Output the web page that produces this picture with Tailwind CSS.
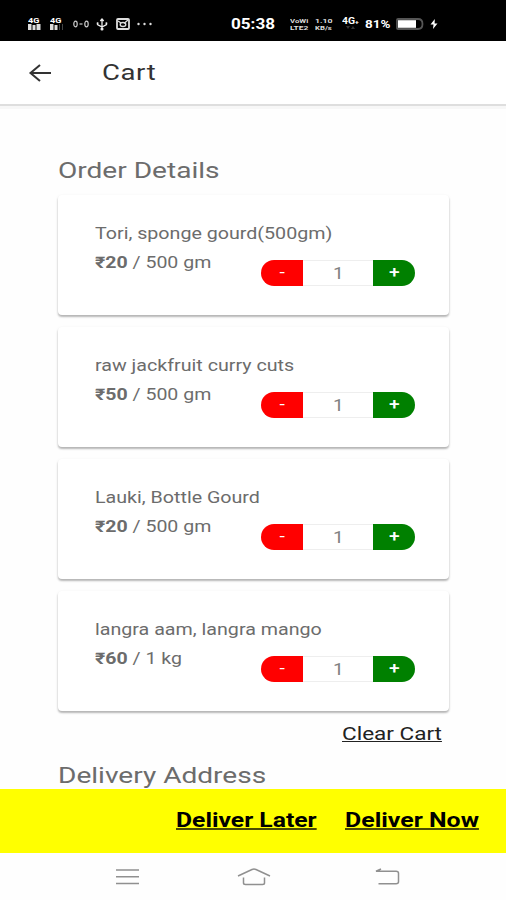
<!DOCTYPE html>
<html lang="en">
<head>
    <meta charset="UTF-8">
    <meta name="viewport" content="width=device-width, initial-scale=1.0">
    <title>Cart</title>
    <script src="https://cdn.jsdelivr.net/npm/@tailwindcss/browser@4"></script>
</head>
<body class="bg-[#fefefe] font-['Roboto',sans-serif] text-[#6c6c6c]">
    <div class="flex h-[900px] w-[506px] flex-col overflow-hidden">
        <!-- Status bar -->
        <div class="flex h-[41px] shrink-0 items-center bg-black pt-[7px] pl-7 text-white">
            <div class="w-[14px] text-[7px] leading-[6px] font-bold"><span class="block w-fit origin-left scale-x-[1.3]">4G</span>
                <svg width="14" height="6" viewBox="0 0 14 6" fill="#ddd"><path d="M0 0h3.500v6H0zM4.500 1h3v5h-3zM8.500 0h4v6h-4z"/></svg>
            </div>
            <div class="ml-2 w-[14px] text-[7px] leading-[6px] font-bold"><span class="block w-fit origin-left scale-x-[1.3]">4G</span>
                <svg width="14" height="6" viewBox="0 0 14 6" fill="#ddd"><path d="M0 0h3.500v6H0zM4.500 1h3v5h-3z"/><path d="M9 0h1v6H9zM12 0h1v6h-1z" fill="#444"/></svg>
            </div>
            <svg class="ml-[9px]" width="16" height="10" viewBox="0 0 16 10" fill="none" stroke="#ccc" stroke-width="1.2"><ellipse cx="2.5" cy="5" rx="1.7" ry="2.8"/><ellipse cx="13.5" cy="5" rx="1.7" ry="2.8"/><path d="M6.500 5h3"/></svg>
            <svg class="ml-[7px]" width="12" height="13" viewBox="0 0 12 13" fill="none" stroke="#eee" stroke-width="1.3"><path d="M6 11V2M1.500 5V6.500L6 9l4.500-2.500V5M4.300 3L6 1l1.700 2"/><rect x="0.800" y="4.300" width="1.600" height="1.600" fill="#eee" stroke="none"/><rect x="9.600" y="4.300" width="1.600" height="1.600" fill="#eee" stroke="none"/><circle cx="6" cy="11" r="0.900" fill="#eee"/></svg>
            <svg class="ml-2" width="14" height="12" viewBox="0 0 14 12" fill="none" stroke="#ddd" stroke-width="1.800"><rect x="1" y="1" width="12" height="10" rx="1"/><ellipse cx="7" cy="6.500" rx="2.800" ry="2" stroke-width="1.300"/><path d="M2 3l3 2M12 2L8 5.500" stroke-width="1.300"/></svg>
            <svg class="ml-[7px]" width="15" height="4" viewBox="0 0 15 4" fill="#ddd"><circle cx="1.500" cy="2" r="1.200"/><circle cx="7.500" cy="2" r="1.200"/><circle cx="13.500" cy="2" r="1.200"/></svg>
            <span class="ml-[79px] w-[44px] origin-left scale-x-[1.22] text-[14px] leading-none font-bold whitespace-nowrap">05:38</span>
            <div class="ml-[15px] w-[19px] text-[6px] leading-[7px] font-bold text-[#ddd]"><span class="block w-fit origin-left scale-x-[1.3]">VoWi</span><span class="block w-fit origin-left scale-x-[1.4]">LTE2</span></div>
            <div class="ml-[6px] w-[18px] text-[6px] leading-[7px] font-bold text-[#ddd]"><span class="block w-fit origin-left scale-x-[1.45]">1.10</span><span class="block w-fit origin-left scale-x-[1.3]">KB/s</span></div>
            <div class="ml-[9px] flex h-[14px] w-[17px] flex-col">
                <span class="w-fit origin-left scale-x-[1.15] text-[9px] leading-[9px] font-bold">4G<span class="text-[6px]">+</span></span>
                <svg class="ml-1" width="10" height="4" viewBox="0 0 10 4" fill="#333"><path d="M0 0l4 0-2 3zM5 3h4L7 0z"/></svg>
            </div>
            <span class="ml-[6px] w-[26px] origin-left scale-x-[1.22] text-[11px] leading-none font-bold">81%</span>
            <svg class="ml-[5px]" width="28" height="12" viewBox="0 0 28 12" fill="none"><path d="M2 1h20q4.500 0 4.500 5t-4.500 5H2q-1 0-1-1V2q0-1 1-1z" stroke="#555" stroke-width="1.800"/><rect x="2" y="2.200" width="18" height="7.600" fill="#fff"/></svg>
            <svg class="ml-[6px]" width="8" height="10" viewBox="0 0 8 10" fill="#fff"><path d="M4.800 0L.5 5.600h3L3 10l4.500-5.500H4.600z"/></svg>
        </div>

        <!-- Header -->
        <header class="z-10 flex h-[63px] shrink-0 items-center bg-white pl-7 text-[#333] shadow-[0_2px_0_#dedede,0_5px_0_#f7f7f7]">
            <svg width="24" height="20" viewBox="0 0 24 20" fill="none" stroke="#333" stroke-width="2"><path d="M23 10H2.500M12 2L2.500 10l9.500 8"/></svg>
            <h1 class="ml-[50px] origin-left scale-x-[1.25] text-[22px] leading-none tracking-[0.5px]">Cart</h1>
        </header>

        <!-- Cart content -->
        <main class="min-h-0 flex-1 overflow-hidden pr-[57px] pl-[58px]">
            <h2 class="mt-[53px] w-fit origin-left scale-x-[1.275] text-[22px] leading-[28px]">Order Details</h2>

            <div class="mt-[10px] flex flex-col gap-3">
                <div class="h-[120px] rounded bg-white pt-[27px] pl-[37px] shadow-[0_2px_2px_rgba(0,0,0,0.24),0_1px_3px_rgba(0,0,0,0.1)]">
                    <p class="w-fit origin-left scale-x-[1.228] text-[16px] leading-6 whitespace-nowrap">Tori, sponge gourd(500gm)</p>
                    <div class="flex pt-[5px]">
                        <p class="w-[166px]"><span class="inline-block origin-left scale-x-[1.22] text-[16px] leading-6 whitespace-nowrap"><b>₹20</b> / 500 gm</span></p>
                        <div class="mt-[9px] flex h-[26px] w-[154px] overflow-hidden rounded-full text-center text-[16px] leading-[26px]">
                            <button class="w-[42px] bg-[#f00] text-white"><span class="inline-block scale-x-[1.2]">-</span></button>
                            <span class="flex-1 border-y border-[#eee] leading-[25px] text-[#808080]"><span class="inline-block scale-x-[1.2]">1</span></span>
                            <button class="w-[42px] bg-[#008000] text-white"><span class="inline-block scale-x-[1.2] font-medium">+</span></button>
                        </div>
                    </div>
                </div>

                <div class="h-[120px] rounded bg-white pt-[27px] pl-[37px] shadow-[0_2px_2px_rgba(0,0,0,0.24),0_1px_3px_rgba(0,0,0,0.1)]">
                    <p class="w-fit origin-left scale-x-[1.228] text-[16px] leading-6 whitespace-nowrap">raw jackfruit curry cuts</p>
                    <div class="flex pt-[5px]">
                        <p class="w-[166px]"><span class="inline-block origin-left scale-x-[1.22] text-[16px] leading-6 whitespace-nowrap"><b>₹50</b> / 500 gm</span></p>
                        <div class="mt-[9px] flex h-[26px] w-[154px] overflow-hidden rounded-full text-center text-[16px] leading-[26px]">
                            <button class="w-[42px] bg-[#f00] text-white"><span class="inline-block scale-x-[1.2]">-</span></button>
                            <span class="flex-1 border-y border-[#eee] leading-[25px] text-[#808080]"><span class="inline-block scale-x-[1.2]">1</span></span>
                            <button class="w-[42px] bg-[#008000] text-white"><span class="inline-block scale-x-[1.2] font-medium">+</span></button>
                        </div>
                    </div>
                </div>

                <div class="h-[120px] rounded bg-white pt-[27px] pl-[37px] shadow-[0_2px_2px_rgba(0,0,0,0.24),0_1px_3px_rgba(0,0,0,0.1)]">
                    <p class="w-fit origin-left scale-x-[1.228] text-[16px] leading-6 whitespace-nowrap">Lauki, Bottle Gourd</p>
                    <div class="flex pt-[5px]">
                        <p class="w-[166px]"><span class="inline-block origin-left scale-x-[1.22] text-[16px] leading-6 whitespace-nowrap"><b>₹20</b> / 500 gm</span></p>
                        <div class="mt-[9px] flex h-[26px] w-[154px] overflow-hidden rounded-full text-center text-[16px] leading-[26px]">
                            <button class="w-[42px] bg-[#f00] text-white"><span class="inline-block scale-x-[1.2]">-</span></button>
                            <span class="flex-1 border-y border-[#eee] leading-[25px] text-[#808080]"><span class="inline-block scale-x-[1.2]">1</span></span>
                            <button class="w-[42px] bg-[#008000] text-white"><span class="inline-block scale-x-[1.2] font-medium">+</span></button>
                        </div>
                    </div>
                </div>

                <div class="h-[120px] rounded bg-white pt-[27px] pl-[37px] shadow-[0_2px_2px_rgba(0,0,0,0.24),0_1px_3px_rgba(0,0,0,0.1)]">
                    <p class="w-fit origin-left scale-x-[1.228] text-[16px] leading-6 whitespace-nowrap">langra aam, langra mango</p>
                    <div class="flex pt-[5px]">
                        <p class="w-[166px]"><span class="inline-block origin-left scale-x-[1.22] text-[16px] leading-6 whitespace-nowrap"><b>₹60</b> / 1 kg</span></p>
                        <div class="mt-[9px] flex h-[26px] w-[154px] overflow-hidden rounded-full text-center text-[16px] leading-[26px]">
                            <button class="w-[42px] bg-[#f00] text-white"><span class="inline-block scale-x-[1.2]">-</span></button>
                            <span class="flex-1 border-y border-[#eee] leading-[25px] text-[#808080]"><span class="inline-block scale-x-[1.2]">1</span></span>
                            <button class="w-[42px] bg-[#008000] text-white"><span class="inline-block scale-x-[1.2] font-medium">+</span></button>
                        </div>
                    </div>
                </div>
            </div>

            <div class="mt-[11px] flex justify-end pr-[7px]">
                <a class="origin-right scale-x-[1.25] text-[18px] leading-6 text-[#222] underline">Clear Cart</a>
            </div>
            <h2 class="mt-[16px] w-fit origin-left scale-x-[1.275] text-[22px] leading-[28px] whitespace-nowrap">Delivery Address</h2>
        </main>

        <!-- Deliver actions -->
        <div class="z-10 flex h-[64px] shrink-0 items-center bg-[#ff0] pb-[2px] pl-[176px] text-[20px] font-bold text-black">
            <a class="w-[169px]"><span class="inline-block origin-left scale-x-[1.235] whitespace-nowrap underline decoration-black/70 decoration-2">Deliver Later</span></a>
            <a><span class="inline-block origin-left scale-x-[1.245] whitespace-nowrap underline decoration-black/70 decoration-2">Deliver Now</span></a>
        </div>

        <!-- Navigation bar -->
        <nav class="flex h-[47px] shrink-0 bg-[#fefefe] pt-[14px] pl-[115px]">
            <svg width="25" height="20" viewBox="0 0 25 20" fill="none" stroke="#909090" stroke-width="1.500"><path d="M1 3h23M1 9.700h23M1 16.400h23"/></svg>
            <svg class="ml-[97px]" width="34" height="20" viewBox="0 0 34 20" fill="none" stroke="#909090" stroke-width="1.500"><path d="M1 9L15 2.500q2-.8 4 0L33 9M6.500 10.500v5.500q0 1.500 2 1.500h17q2 0 2-1.500v-5.500"/></svg>
            <svg class="ml-[103px]" width="26" height="20" viewBox="0 0 26 20" fill="none" stroke="#909090" stroke-width="1.500"><path d="M7 2L2 4.300h20q2.500 0 2.500 2v8.500q0 2-2.500 2H4.500"/></svg>
        </nav>
    </div>
</body>
</html>
